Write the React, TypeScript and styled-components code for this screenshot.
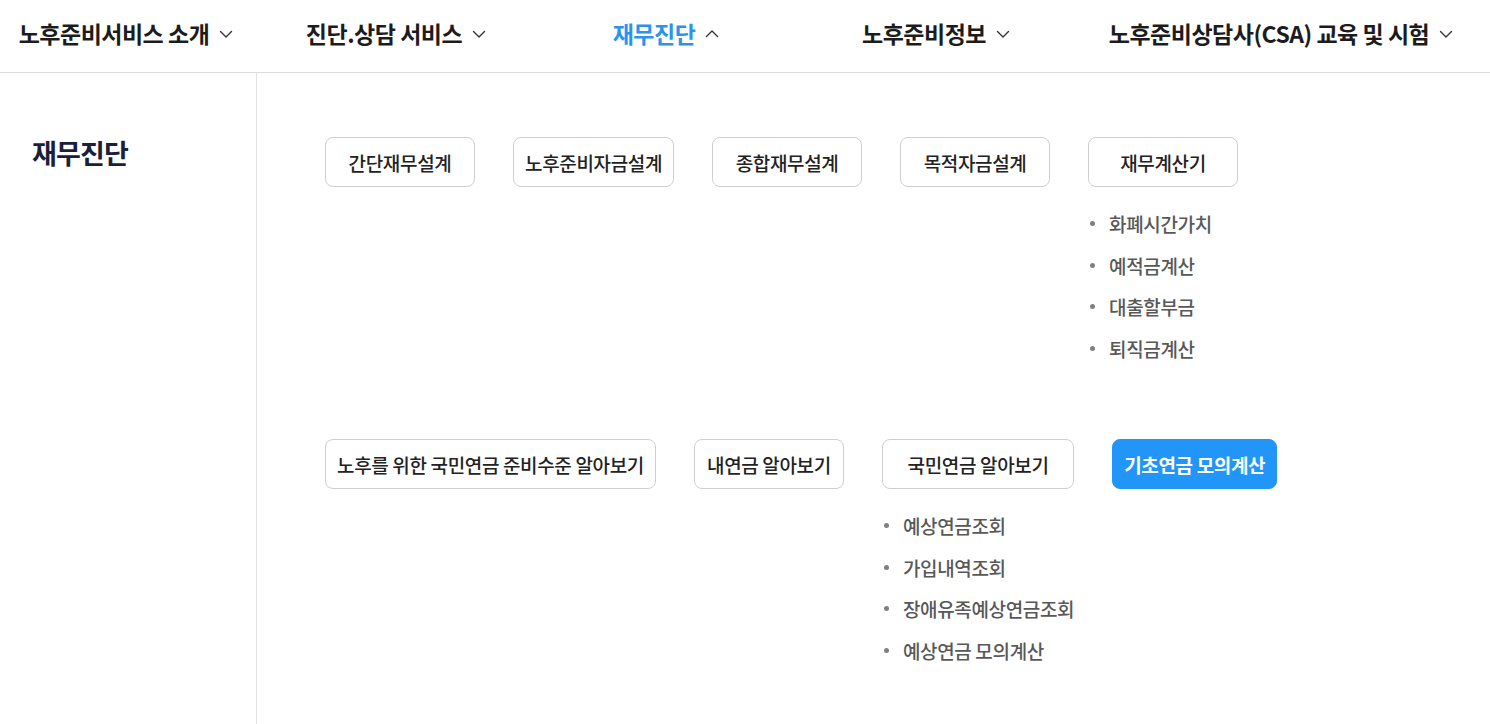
import styled, { createGlobalStyle } from "styled-components";

const GlobalStyle = createGlobalStyle`
  * {
    box-sizing: border-box;
  }
  body {
    margin: 0;
    background: #fff;
    font-family: "Noto Sans CJK KR", "Noto Sans", sans-serif;
  }
  ul {
    margin: 0;
    padding: 0;
    list-style: none;
  }
`;

type Menu = {
  label: string;
  active?: boolean;
  sub?: string[];
};

const navItems = [
  { label: "노후준비서비스 소개" },
  { label: "진단.상담 서비스" },
  { label: "재무진단", active: true },
  { label: "노후준비정보" },
  { label: "노후준비상담사(CSA) 교육 및 시험" },
];

const rows: Menu[][] = [
  [
    { label: "간단재무설계" },
    { label: "노후준비자금설계" },
    { label: "종합재무설계" },
    { label: "목적자금설계" },
    {
      label: "재무계산기",
      sub: ["화폐시간가치", "예적금계산", "대출할부금", "퇴직금계산"],
    },
  ],
  [
    { label: "노후를 위한 국민연금 준비수준 알아보기" },
    { label: "내연금 알아보기" },
    {
      label: "국민연금 알아보기",
      sub: ["예상연금조회", "가입내역조회", "장애유족예상연금조회", "예상연금 모의계산"],
    },
    { label: "기초연금 모의계산", active: true },
  ],
];

function Chevron({ up }: { up?: boolean }) {
  return (
    <svg width="14" height="14" viewBox="0 0 14 14" fill="none">
      <path
        d={up ? "M1.5 9.5 L7 4 L12.5 9.5" : "M1.5 4.5 L7 10 L12.5 4.5"}
        stroke="#333"
        strokeWidth="1.4"
        strokeLinecap="round"
        strokeLinejoin="round"
      />
    </svg>
  );
}

export default function App() {
  return (
    <>
      <GlobalStyle />
      <Page>
        <Header>
          <Nav>
            {navItems.map((item) => (
              <NavItem key={item.label} $active={item.active}>
                <span>{item.label}</span>
                <Chevron up={item.active} />
              </NavItem>
            ))}
          </Nav>
        </Header>
        <Body>
          <Sidebar>
            <SideTitle>재무진단</SideTitle>
          </Sidebar>
          <Content>
            {rows.map((row, i) => (
              <Row key={i}>
                {row.map((menu) => (
                  <Column key={menu.label}>
                    <MenuButton $active={menu.active}>{menu.label}</MenuButton>
                    {menu.sub && (
                      <SubList>
                        {menu.sub.map((s) => (
                          <SubItem key={s}>{s}</SubItem>
                        ))}
                      </SubList>
                    )}
                  </Column>
                ))}
              </Row>
            ))}
          </Content>
        </Body>
      </Page>
    </>
  );
}

const Page = styled.div`
  display: flex;
  flex-direction: column;
  height: 724px;
  overflow: hidden;
`;

const Header = styled.header`
  height: 73px;
  border-bottom: 1px solid #dcdcdc;
  flex-shrink: 0;
`;

const Nav = styled.nav`
  display: grid;
  grid-template-columns: 270px 270px 270px 270px 420px;
  margin-left: -9px;
  height: 72px;
  padding-bottom: 6px;
  align-items: center;
`;

const NavItem = styled.div<{ $active?: boolean }>`
  display: flex;
  align-items: center;
  justify-content: center;
  gap: 10px;
  font-size: 23px;
  font-weight: 700;
  letter-spacing: -0.5px;
  color: ${(p) => (p.$active ? "#2b93ee" : "#1c1c1c")};
  cursor: pointer;

  svg {
    margin-top: 2px;
  }
`;

const Body = styled.div`
  display: flex;
  flex: 1;
`;

const Sidebar = styled.aside`
  width: 257px;
  flex-shrink: 0;
  border-right: 1px solid #e2e2e2;
  padding: 60px 0 0 32px;
`;

const SideTitle = styled.h2`
  margin: 0;
  font-size: 27px;
  font-weight: 700;
  letter-spacing: -0.8px;
  color: #1b2039;
  line-height: 40px;
`;

const Content = styled.main`
  flex: 1;
  display: flex;
  flex-direction: column;
  row-gap: 70px;
  padding: 64px 0 0 68px;
`;

const Row = styled.div`
  display: flex;
  align-items: flex-start;
  column-gap: 38px;
`;

const Column = styled.div`
  display: flex;
  flex-direction: column;
`;

const MenuButton = styled.button<{ $active?: boolean }>`
  min-width: 150px;
  height: 50px;
  padding: 0 11px;
  border-radius: 8px;
  border: 1px solid ${(p) => (p.$active ? "#2196f8" : "#cfcfcf")};
  background: ${(p) => (p.$active ? "#2196f8" : "#fff")};
  color: ${(p) => (p.$active ? "#fff" : "#222")};
  font-family: "Noto Sans CJK KR", "Noto Sans", sans-serif;
  font-size: 19px;
  font-weight: ${(p) => (p.$active ? 700 : 500)};
  letter-spacing: -0.35px;
  white-space: nowrap;
  cursor: pointer;
`;

const SubList = styled.ul`
  padding: 16px 0 0 0 !important;
  display: flex;
  flex-direction: column;
`;

const SubItem = styled.li`
  display: flex;
  align-items: center;
  height: 41.5px;
  font-size: 19px;
  font-weight: 500;
  letter-spacing: -0.35px;
  color: #585858;
  white-space: nowrap;

  &::before {
    content: "";
    width: 5px;
    height: 5px;
    border-radius: 50%;
    background: #808080;
    margin: 0 14px 0 2px;
  }
`;
